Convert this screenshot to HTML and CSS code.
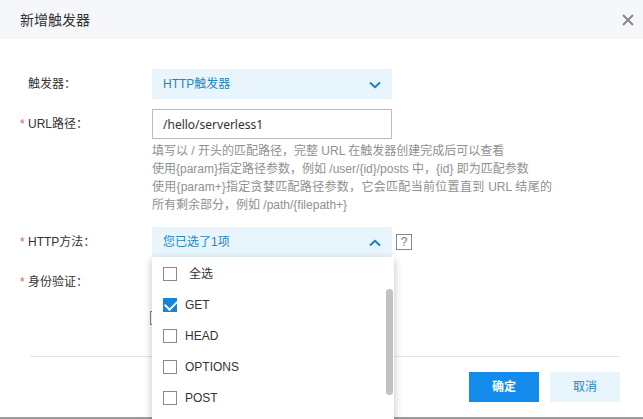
FILE: index.html
```html
<!DOCTYPE html>
<html lang="zh-CN">
<head>
<meta charset="utf-8">
<meta name="viewport" content="width=device-width, initial-scale=1">
<title>新增触发器</title>
<link rel="stylesheet" href="styles.css">
</head>
<body>
<main class="dialog">
  <header class="dialog-header">
    <h1 class="dialog-title">新增触发器</h1>
    <button class="close" type="button" aria-label="关闭">
      <svg viewBox="0 0 12 12" width="12" height="12"><path d="M1 1 11 11M11 1 1 11"/></svg>
    </button>
  </header>
  <form class="form">
    <div class="row">
      <label class="label" for="trigger">触发器：</label>
      <div class="select-wrap">
        <select class="select" id="trigger"><option>HTTP触发器</option></select>
        <svg class="chevron" viewBox="0 0 12 8" width="12" height="8"><path d="M1 1.5 6 6.2 11 1.5"/></svg>
      </div>
    </div>
    <div class="row">
      <label class="label required" for="path">URL路径：</label>
      <div class="field">
        <input class="input" id="path" type="text" value="/hello/serverless1">
        <p class="help">填写以 / 开头的匹配路径，完整 URL 在触发器创建完成后可以查看<br>使用{param}指定路径参数，例如 /user/{id}/posts 中，{id} 即为匹配参数<br>使用{param+}指定贪婪匹配路径参数，它会匹配当前位置直到 URL 结尾的所有剩余部分，例如 /path/{filepath+}</p>
      </div>
    </div>
    <div class="row">
      <label class="label required" for="method">HTTP方法：</label>
      <div class="select-wrap">
        <button class="select" id="method" type="button" aria-expanded="true">您已选了1项</button>
        <svg class="chevron" viewBox="0 0 12 8" width="12" height="8"><path d="M1 6.5 6 1.8 11 6.5"/></svg>
        <div class="menu">
          <label class="option all"><input class="check" type="checkbox">全选</label>
          <label class="option"><input class="check" type="checkbox" checked>GET</label>
          <label class="option"><input class="check" type="checkbox">HEAD</label>
          <label class="option"><input class="check" type="checkbox">OPTIONS</label>
          <label class="option"><input class="check" type="checkbox">POST</label>
          <span class="thumb"></span>
        </div>
      </div>
      <button class="hint" type="button">?</button>
    </div>
    <div class="row">
      <label class="label required" for="auth">身份验证：</label>
      <input class="check auth" id="auth" type="checkbox">
    </div>
    <footer class="actions">
      <button class="btn primary" type="submit">确定</button>
      <button class="btn" type="button">取消</button>
    </footer>
  </form>
</main>
</body>
</html>
```

FILE: styles.css
```css
* {
  box-sizing: border-box;
}

html {
  height: 100%;
  overflow: hidden;
  background: #9c9c9c;
}

body {
  height: 100%;
  margin: 0;
  color: #333;
  font: 12px/18px "Liberation Sans", "Noto Sans CJK SC", sans-serif;
}

button,
input,
select {
  margin: 0;
  font: inherit;
}

button {
  padding: 0;
  border: 0;
}

.dialog {
  background: #fff;
}

.dialog-header {
  display: flex;
  align-items: center;
  justify-content: space-between;
  height: 39px;
  padding: 0 8px 0 20px;
  background: #f5f7fa;
}

.dialog-title {
  margin: 0;
  font-size: 14px;
  font-weight: 400;
}

.close {
  display: grid;
  place-items: center;
  width: 14px;
  height: 14px;
  background: none;
}

svg {
  fill: none;
  stroke: #888;
  stroke-width: 2;
}

.form {
  display: flex;
  flex-direction: column;
  gap: 10px;
  padding: 30px 23px 15px 20px;
}

.row {
  display: flex;
  align-items: flex-start;
}

.label {
  flex: none;
  width: 132px;
  padding-left: 8px;
  line-height: 30px;
}

.required {
  padding-left: 0;
}

.required::before {
  content: "*";
  display: inline-block;
  width: 8px;
  color: #cf6464;
}

.select-wrap {
  position: relative;
  width: 240px;
}

.select {
  display: block;
  width: 100%;
  height: 30px;
  padding: 0 11px;
  border: 0;
  border-radius: 0;
  appearance: none;
  background: #e8f5fd;
  color: #1f87bd;
  text-align: left;
}

.chevron {
  position: absolute;
  top: 12px;
  right: 11px;
  stroke: #1a80c0;
  pointer-events: none;
}

.input {
  display: block;
  width: 240px;
  height: 30px;
  padding: 0 10px;
  border: 1px solid #bbb;
  color: #333;
  font-family: "Noto Sans", sans-serif;
}

.help {
  max-width: 400px;
  margin: 3px 0;
  color: #909090;
  text-align: justify;
}

.menu {
  position: absolute;
  z-index: 1;
  top: 30px;
  left: 0;
  width: 242px;
  height: 162px;
  padding-top: 1px;
  background: #fff;
  box-shadow: 0 3px 8px rgba(0, 0, 0, 0.25);
}

.option {
  display: flex;
  align-items: center;
  gap: 8px;
  height: 31px;
  padding-left: 11px;
}

.all {
  gap: 12px;
}

.check {
  flex: none;
  width: 14px;
  height: 14px;
  border: 1px solid #888;
  appearance: none;
  background: #fff;
}

.check:checked {
  border-color: #1684d8;
  background: #1684d8;
}

.check:checked::after {
  content: "";
  display: block;
  width: 10px;
  height: 6px;
  margin: 2px 1px;
  border: solid #fff;
  border-width: 0 0 2px 2px;
  transform: translateY(-1px) rotate(-45deg);
}

.thumb {
  position: absolute;
  top: 32px;
  right: 1px;
  width: 7px;
  height: 106px;
  border-radius: 4px;
  background: #c1c1c1;
}

.hint {
  width: 16px;
  height: 16px;
  margin: 7px 0 0 4px;
  border: 1px solid #888;
  background: #fff;
  color: #777;
  line-height: 14px;
}

.auth {
  margin: 44px 0 0 -2px;
}

.actions {
  display: flex;
  justify-content: flex-end;
  gap: 11px;
  margin: 21px 0 0 10px;
  padding-top: 15px;
  border-top: 1px solid #e5e5e5;
}

.btn {
  width: 70px;
  height: 30px;
  background: #e8f5fd;
  color: #1f87bd;
}

.primary {
  background: #128bed;
  color: #fff;
  font-weight: 700;
}
```
